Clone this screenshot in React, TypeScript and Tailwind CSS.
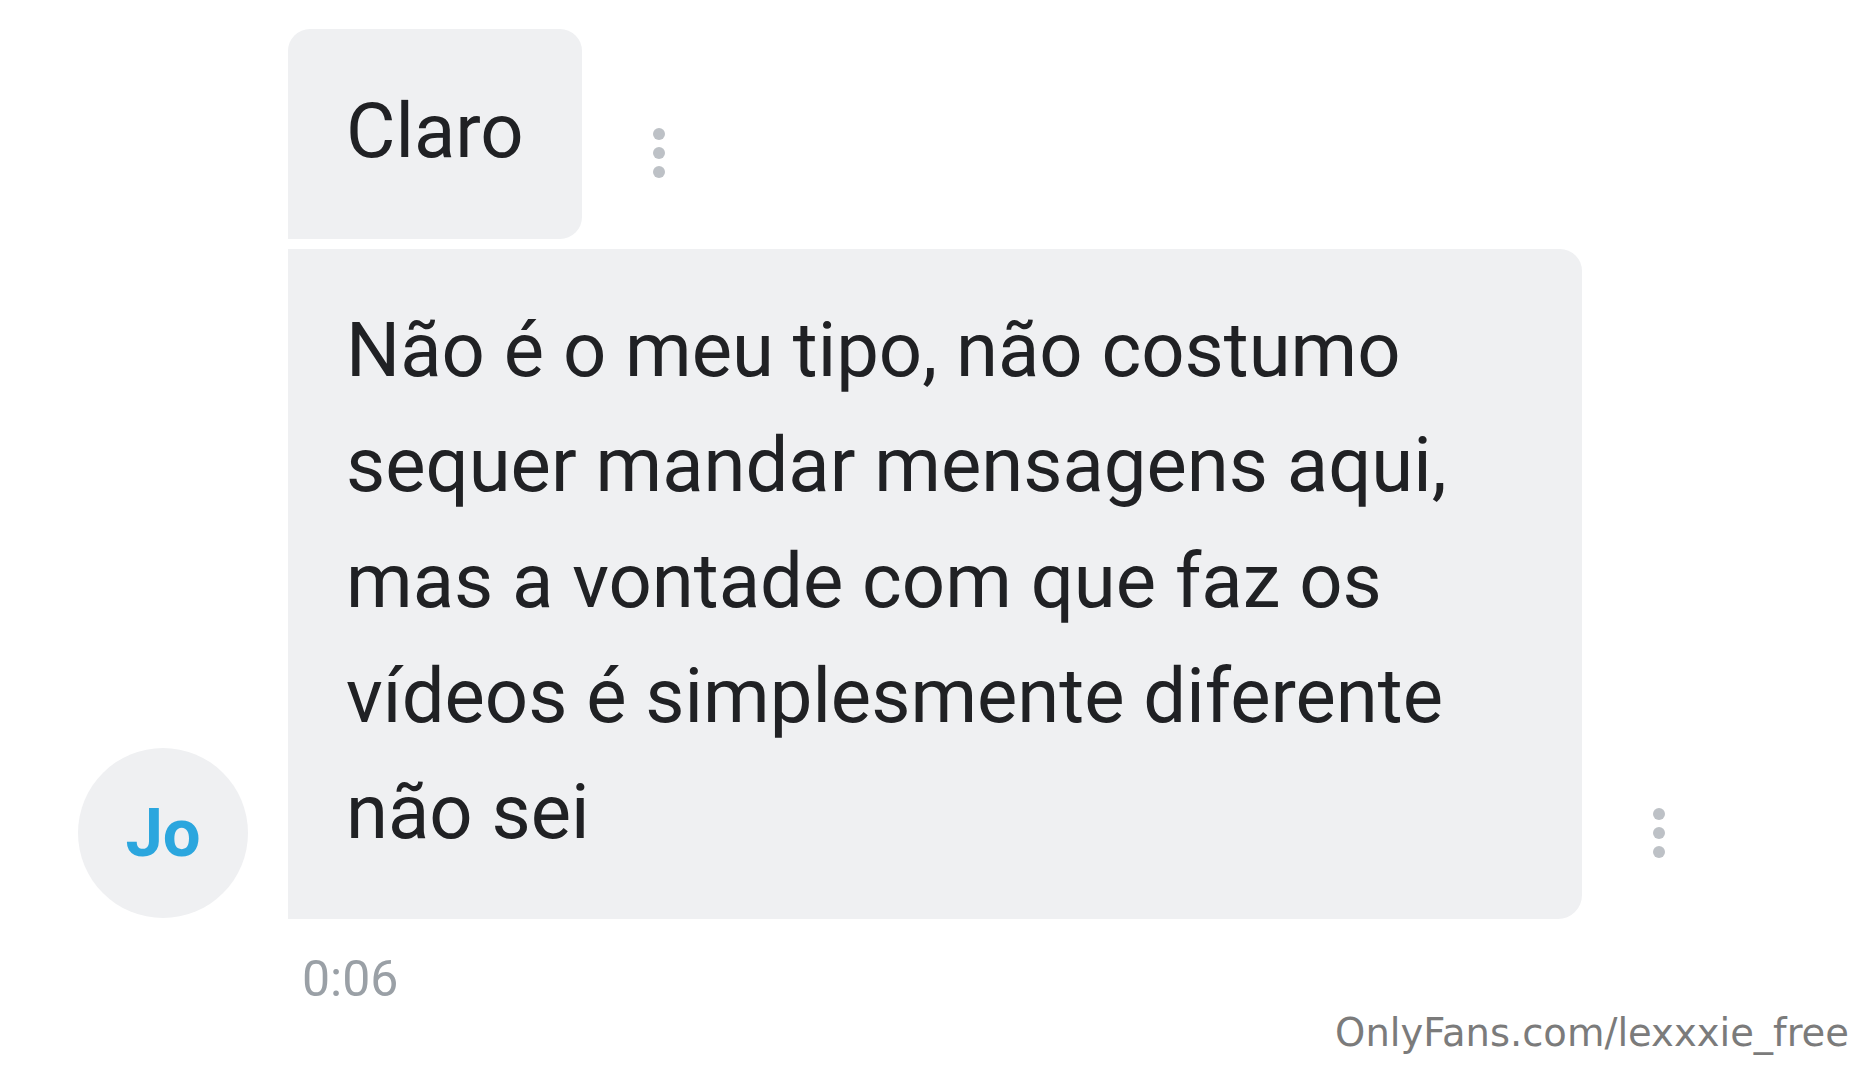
function Dots() {
  return (
    <div className="ml-[71px] mb-[61px] flex flex-col gap-[7px] shrink-0">
      <span className="block h-[12px] w-[12px] rounded-full bg-[#bdc1c6]" />
      <span className="block h-[12px] w-[12px] rounded-full bg-[#bdc1c6]" />
      <span className="block h-[12px] w-[12px] rounded-full bg-[#bdc1c6]" />
    </div>
  );
}

const lines = [
  'Não é o meu tipo, não costumo',
  'sequer mandar mensagens aqui,',
  'mas a vontade com que faz os',
  'vídeos é simplesmente diferente',
  'não sei',
];

export default function App() {
  return (
    <div
      className="min-h-screen bg-white pt-[29px] pl-[78px] text-[#202124]"
      style={{ fontFamily: "Roboto, 'Liberation Sans', sans-serif" }}
    >
      {/* first message */}
      <div className="flex items-end gap-[40px]">
        <div className="w-[170px] shrink-0" />
        <div className="flex items-end">
          <div className="w-[294px] rounded-t-[22px] rounded-br-[22px] bg-[#eff0f2] pl-[58px] pt-[45px] pb-[49px] text-[76px] leading-[115.5px] whitespace-nowrap">
            Claro
          </div>
          <Dots />
        </div>
      </div>

      {/* second message with avatar */}
      <div className="mt-[10px] flex items-end gap-[40px]">
        <div className="mb-[1px] flex h-[170px] w-[170px] shrink-0 items-center justify-center rounded-full bg-[#eff0f2]">
          <span className="text-[67px] font-bold leading-none text-[#2ba6de]">Jo</span>
        </div>
        <div className="flex items-end">
          <div className="w-[1294px] rounded-tr-[22px] rounded-br-[24px] bg-[#eff0f2] pl-[58px] pr-[40px] pt-[44px] pb-[49px] text-[76px] leading-[115.5px] whitespace-nowrap">
            {lines.map((l, i) => (
              <div key={i}>{l}</div>
            ))}
          </div>
          <Dots />
        </div>
      </div>

      {/* timestamp */}
      <div className="mt-[30px] pl-[224px] text-[50px] leading-[60px] text-[#9aa0a6]">0:06</div>

      {/* watermark */}
      <div
        className="mt-[2px] flex justify-end pr-[22px] text-[38.5px] leading-[44px] text-[#7b7b7b]"
        style={{ fontFamily: "'DejaVu Sans', sans-serif" }}
      >
        OnlyFans.com/lexxxie_free
      </div>
    </div>
  );
}
